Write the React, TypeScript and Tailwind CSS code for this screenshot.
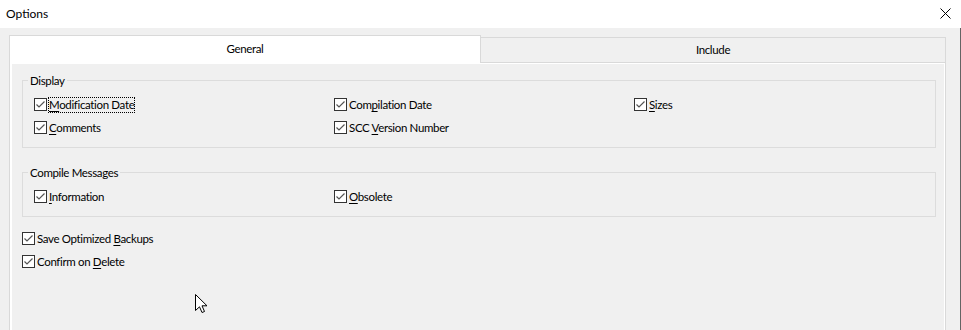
import type { ReactNode } from "react"

const font = "font-['Lato','Liberation_Sans',sans-serif]"

const Box = () => (
  <span className="w-[13px] h-[13px] border border-[#333333] bg-white flex items-center justify-center shrink-0">
    <svg width="11" height="11" viewBox="0 0 11 11" fill="none">
      <path d="M1.5 5.5 L4 8 L9.5 2.5" stroke="#555555" strokeWidth="1.2" />
    </svg>
  </span>
)

function Check({ children, focus = false }: { children: ReactNode; focus?: boolean }) {
  return (
    <label className="flex items-center h-[23px]">
      <Box />
      <span
        className={`ml-[1px] leading-[14px] border border-dotted whitespace-nowrap ${
          focus ? "border-black" : "border-transparent"
        }`}
      >
        {children}
      </span>
    </label>
  )
}

const U = ({ children }: { children: ReactNode }) => (
  <span className="underline underline-offset-[2px] decoration-[1px]">{children}</span>
)

function Group({ title, children, className = "" }: { title: string; children: ReactNode; className?: string }) {
  return (
    <div className={`relative ml-[10px] mr-[8px] border border-[#dcdcdc] pl-[11px] pt-[12px] pb-[8px] ${className}`}>
      <span className="absolute left-[5px] -top-[8px] px-[2px] bg-[#f0f0f0] leading-[16px]">{title}</span>
      <div className="grid grid-cols-[300px_300px_1fr]">{children}</div>
    </div>
  )
}

export default function App() {
  return (
    <div className={`relative w-[961px] h-[330px] bg-[#f0f0f0] flex flex-col overflow-hidden text-[11.5px] tracking-[-0.35px] text-black ${font}`}>
      {/* Title bar */}
      <div className="h-[28px] bg-white flex items-center justify-between pl-[6px] pr-[10px] pb-[1px] shrink-0">
        <span className="text-[12px] tracking-normal">Options</span>
        <svg width="11" height="11" viewBox="0 0 11 11" fill="none">
          <path d="M0.5 0.5 L10.5 10.5 M10.5 0.5 L0.5 10.5" stroke="#000" strokeWidth="1" />
        </svg>
      </div>

      {/* Body */}
      <div className="flex-1 flex flex-col border-r border-[#646464] pl-[9px] pr-[14px] pt-[7px]">
        {/* Tabs */}
        <div className="flex items-start h-[28px] shrink-0">
          <div className="w-[472px] h-[28px] bg-white border-l border-t border-r border-[#d9d9d9] flex items-center justify-center pb-[2px]">
            General
          </div>
          <div className="-ml-[1px] mt-[2px] flex-1 h-[26px] bg-[#f0f0f0] border border-[#d9d9d9] flex items-center justify-center">
            Include
          </div>
        </div>

        {/* Panel */}
        <div className="flex-1 border-x border-[#d9d9d9] flex flex-col">
          <div className="flex-1 border-l-2 border-t border-r border-white flex flex-col">
            <Group title="Display" className="mt-[16px]">
              <Check focus>
                <U>M</U>odification Date
              </Check>
              <Check>
                Com<U>p</U>ilation Date
              </Check>
              <Check>
                <U>S</U>izes
              </Check>
              <Check>
                <U>C</U>omments
              </Check>
              <Check>
                SCC <U>V</U>ersion Number
              </Check>
            </Group>

            <Group title="Compile Messages" className="mt-[24px]">
              <Check>
                <U>I</U>nformation
              </Check>
              <Check>
                <U>O</U>bsolete
              </Check>
            </Group>

            <div className="ml-[10px] mt-[10px] flex flex-col">
              <Check>
                Save Optimized <U>B</U>ackups
              </Check>
              <Check>
                Confirm on <U>D</U>elete
              </Check>
            </div>
          </div>
        </div>
      </div>

      {/* Mouse pointer */}
      <svg className="absolute left-[195px] top-[294px]" width="13" height="20" viewBox="0 0 13 20" fill="none">
        <path
          d="M0.5 0.5 L0.5 16.5 L4.5 12.8 L7 18.5 L9.5 17.5 L7 11.8 L12 11.8 Z"
          fill="#ffffff"
          stroke="#000000"
          strokeWidth="1"
          strokeLinejoin="round"
        />
      </svg>
    </div>
  )
}
